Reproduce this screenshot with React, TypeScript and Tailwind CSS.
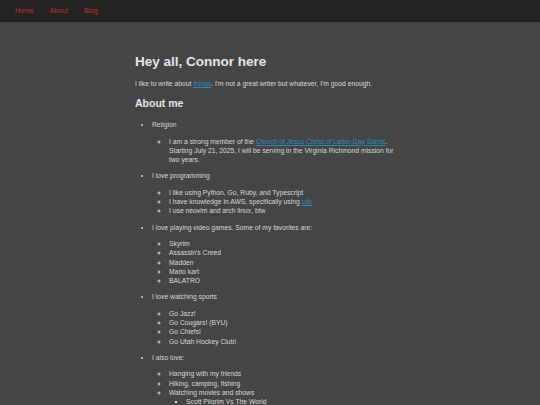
function Link({ children }: { children: React.ReactNode }) {
  return <a className="text-[#2b8ac0] underline">{children}</a>;
}

function Section({ label, children }: { label: string; children: React.ReactNode }) {
  return (
    <li>
      <div>{label}</div>
      <ul className="my-[7px] list-[circle] pl-[17px]">{children}</ul>
    </li>
  );
}

export default function App() {
  return (
    <div className="min-h-screen bg-[#454545] text-[#d8d8d8] font-['Liberation_Sans',Arial,sans-serif]">
      <nav className="h-[22px] bg-[#232323] flex items-center gap-[16px] px-[15px] text-[7px] text-[#c42b2b]">
        <a>Home</a>
        <a>About</a>
        <a>Blog</a>
      </nav>

      <main className="w-[270px] mx-auto pt-[32px] text-[6.75px] leading-[9.3px]">
        <h1 className="text-[13.5px] leading-[16px] font-bold text-[#e6e6e6]">Hey all, Connor here</h1>
        <p className="mt-[9px]">
          I like to write about <Link>things</Link>. I'm not a great writer but whatever, I'm good enough.
        </p>
        <h2 className="mt-[9px] text-[10.5px] leading-[13px] font-bold text-[#e6e6e6]">About me</h2>

        <ul className="mt-[10px] list-disc pl-[17px]">
          <Section label="Religion">
            <li>
              I am a strong member of the <Link>Church of Jesus Christ of Latter-Day Saints</Link>. Starting July 21,
              2025, I will be serving in the Virginia Richmond mission for two years.
            </li>
          </Section>
          <Section label="I love programming">
            <li>I like using Python, Go, Ruby, and Typescript</li>
            <li>
              I have knowledge in AWS, specifically using <Link>cdk</Link>
            </li>
            <li>I use neovim and arch linux, btw</li>
          </Section>
          <Section label="I love playing video games. Some of my favorites are:">
            <li>Skyrim</li>
            <li>Assassin's Creed</li>
            <li>Madden</li>
            <li>Mario kart</li>
            <li>BALATRO</li>
          </Section>
          <Section label="I love watching sports">
            <li>Go Jazz!</li>
            <li>Go Cougars! (BYU)</li>
            <li>Go Chiefs!</li>
            <li>Go Utah Hockey Club!</li>
          </Section>
          <Section label="I also love:">
            <li>Hanging with my friends</li>
            <li>Hiking, camping, fishing</li>
            <li>
              Watching movies and shows
              <ul className="list-[square] pl-[17px]">
                <li>Scott Pilgrim Vs The World</li>
                <li>The Office</li>
              </ul>
            </li>
          </Section>
        </ul>
      </main>
    </div>
  );
}
